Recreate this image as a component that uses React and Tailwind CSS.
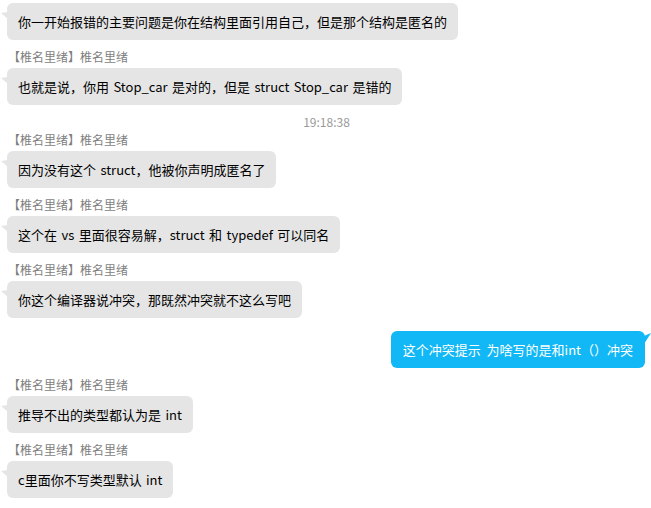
import React from 'react';

// chat log (left = other side, right = me)
const messages = [
  { type: 'in', text: '你一开始报错的主要问题是你在结构里面引用自己，但是那个结构是匿名的', noName: true },
  { type: 'in', text: '也就是说，你用 Stop_car 是对的，但是 struct Stop_car 是错的' },
  { type: 'time', text: '19:18:38' },
  { type: 'in', text: '因为没有这个 struct，他被你声明成匿名了', afterTime: true },
  { type: 'in', text: '这个在 vs 里面很容易解，struct 和 typedef 可以同名' },
  { type: 'in', text: '你这个编译器说冲突，那既然冲突就不这么写吧' },
  { type: 'out', text: '这个冲突提示  为啥写的是和int（）冲突' },
  { type: 'in', text: '推导不出的类型都认为是 int' },
  { type: 'in', text: 'c里面你不写类型默认 int' },
];

const NAME = '【椎名里绪】椎名里绪';

const LeftTail = () => (
  <svg className="absolute left-[-6px] top-[9px]" width="7" height="8" viewBox="0 0 7 8">
    <path d="M7 0 L0 1 L7 7 Z" fill="#e5e5e5" />
  </svg>
);

const RightTail = () => (
  <svg className="absolute right-[-6px] top-[2px]" width="7" height="12" viewBox="0 0 7 12">
    <path d="M0 3 L7 0 L0 11 Z" fill="#12b7f5" />
  </svg>
);

const InBubble = ({ text, noName, afterTime }) => (
  <div className={noName ? 'mt-[3px]' : afterTime ? '' : 'mt-[8px]'}>
    {!noName && (
      <div className="h-[18px] leading-[18px] text-[12px] text-[#7f7f7f] pl-[8px] mb-[2px]">{NAME}</div>
    )}
    <div className="flex pl-[7px]">
      <div className="relative bg-[#e5e5e5] rounded-[6px] px-[11px] py-[10px] text-[13px] leading-[17px] text-black whitespace-pre [word-spacing:1.5px]">
        <LeftTail />
        {text}
      </div>
    </div>
  </div>
);

const OutBubble = ({ text }) => (
  <div className="flex justify-end pr-[6px] mt-[13px]">
    <div className="relative bg-[#12b7f5] rounded-[6px] px-[12px] py-[10px] text-[13px] leading-[17px] text-white whitespace-pre">
      <RightTail />
      {text}
    </div>
  </div>
);

export default function App() {
  return (
    <div
      className="w-[651px] h-[508px] bg-white overflow-hidden"
      style={{ fontFamily: '"Noto Sans CJK SC", "Noto Sans", sans-serif' }}
    >
      {messages.map((m, i) => {
        if (m.type === 'time')
          return (
            <div key={i} className="mt-[8px] h-[18px] leading-[18px] text-[12px] text-[#999] text-center pl-[2px]">
              {m.text}
            </div>
          );
        if (m.type === 'out') return <OutBubble key={i} text={m.text} />;
        return <InBubble key={i} {...m} />;
      })}
    </div>
  );
}
